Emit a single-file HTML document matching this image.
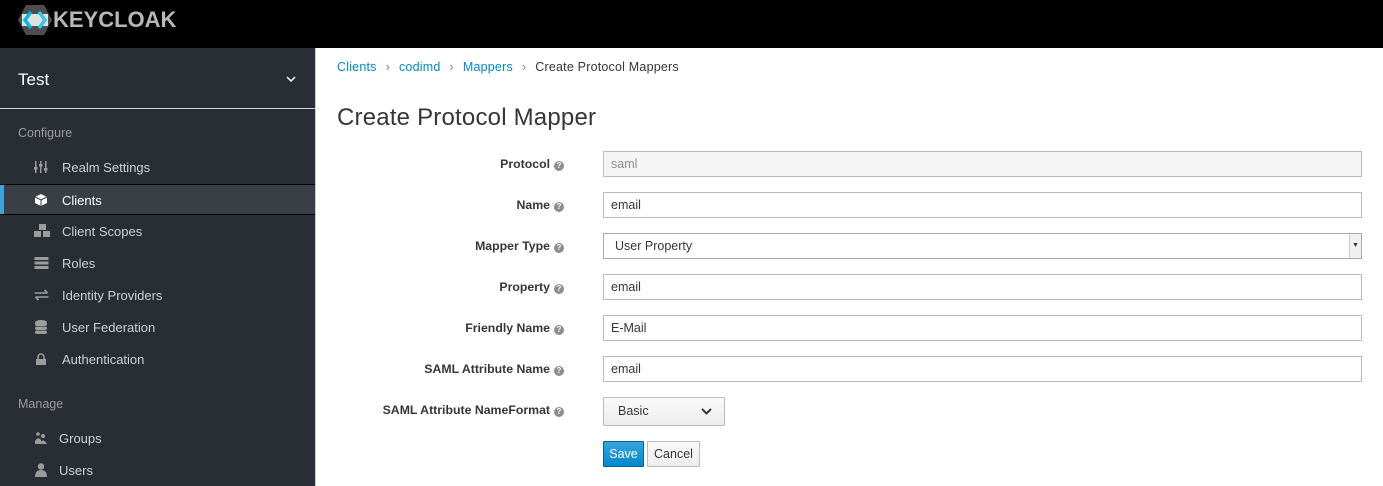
<!DOCTYPE html>
<html><head><style>
*{box-sizing:border-box;margin:0;padding:0}
body{width:1383px;height:486px;overflow:hidden;font-family:"Liberation Sans",sans-serif;font-size:12px;color:#363636;background:#fff;position:relative}
.hdr{position:absolute;left:0;top:0;width:1383px;height:48px;background:#000}
.side{position:absolute;left:0;top:48px;width:316px;height:438px;background:#292e34;border-right:1px solid #ccc}
.realm{position:relative;height:61px;border-bottom:1px solid #d1d1d1;color:#fff;font-size:17px;padding:22px 18px}
.sec{color:#9c9c9c;font-size:12.5px;padding-left:18px;position:absolute}
.it{position:absolute;left:0;width:315px;height:31px;color:#d1d1d1;font-size:13px;line-height:31px;padding-left:62px}
.it.act{background:#393f44;border-top:1px solid #030303;border-bottom:1px solid #030303;color:#fff}
.it.act:before{content:"";position:absolute;left:0;top:0;width:4px;height:100%;background:#39a5dc}
.ic{position:absolute;left:34px;top:9px;width:14px;height:12px}
.bc{position:absolute;left:337px;top:60px;font-size:12.5px;color:#363636;letter-spacing:0.2px}
.bc a{color:#0088ce}.bc span{color:#8b8d8f;margin:0 9px}
h1{position:absolute;left:337px;top:104px;font-weight:300;font-size:24px;color:#363636;letter-spacing:0.2px}
.lab{position:absolute;right:819px;font-weight:bold;font-size:12.3px;text-align:right;white-space:nowrap}
.q{display:inline-block;width:10px;height:10px;border-radius:50%;background:#8b8d8f;color:#fff;font-size:8px;line-height:10px;text-align:center;margin-left:4px;vertical-align:0}
.in{position:absolute;left:603px;width:759px;height:26px;border:1px solid #bbb;padding:0 7px;line-height:24px;font-size:12.5px}
</style></head><body>
<div class="hdr">
<svg style="position:absolute;left:18px;top:4px" width="34" height="32" viewBox="0 0 34 32"><polygon points="8,1 26,1 34,16 26,31 8,31 0,16" fill="#4d4d4d"/><polygon points="4,10 30,10 30,22 4,22" fill="#e0e0e0"/><path d="M13,8 L7,16 L13,24" stroke="#00b9e4" stroke-width="3.5" fill="none"/><path d="M21,8 L27,16 L21,24" stroke="#33c6e9" stroke-width="3.5" fill="none"/></svg>
<div style="position:absolute;left:53px;top:7px;color:#b8b8b8;font-weight:bold;font-size:22px">KEYCLOAK</div>
</div>
<div class="side">
<div class="realm">Test<svg style="position:absolute;left:286px;top:28px" width="10" height="6" viewBox="0 0 10 6"><path d="M1 1L5 5L9 1" stroke="#fff" stroke-width="1.5" fill="none"/></svg></div>
<div class="sec" style="top:78px">Configure</div>
<div class="it" style="top:104px"><svg class="ic" viewBox="0 0 14 12"><g fill="#9c9c9c"><rect x="1" y="0" width="1.5" height="12"/><rect x="6" y="0" width="1.5" height="12"/><rect x="11" y="0" width="1.5" height="12"/><rect x="0" y="6" width="3.5" height="2.5"/><rect x="5" y="3" width="3.5" height="2.5"/><rect x="10" y="7" width="3.5" height="2.5"/></g></svg>Realm Settings</div>
<div class="it act" style="top:136px"><svg class="ic" viewBox="0 0 14 12"><path d="M7 0 L13 3 L13 9 L7 12 L1 9 L1 3Z" fill="#fff"/><path d="M1 3 L7 6 L13 3 M7 6 V12" stroke="#393f44" stroke-width="1" fill="none"/></svg>Clients</div>
<div class="it" style="top:168px"><svg class="ic" viewBox="0 0 18 14" style="width:18px;height:14px;top:8px"><g fill="#9c9c9c"><rect x="5" y="0" width="7" height="6"/><rect x="0" y="7" width="7" height="6"/><rect x="9" y="7" width="7" height="6"/></g></svg>Client Scopes</div>
<div class="it" style="top:200px"><svg class="ic" viewBox="0 0 14 12" style="width:15px"><g fill="#9c9c9c"><rect y="0" width="14" height="3"/><rect y="4.5" width="14" height="3"/><rect y="9" width="14" height="3"/></g></svg>Roles</div>
<div class="it" style="top:232px"><svg class="ic" viewBox="0 0 14 12" style="width:15px"><path d="M0 4H13M10 1L13 4M14 8H1M4 11L1 8" stroke="#9c9c9c" stroke-width="1.6" fill="none"/></svg>Identity Providers</div>
<div class="it" style="top:264px"><svg class="ic" viewBox="0 0 14 14" style="height:14px;top:8px"><g fill="#9c9c9c"><ellipse cx="7" cy="2.5" rx="6" ry="2.5"/><rect x="1" y="2.5" width="12" height="3.5" rx="2"/><rect x="1" y="6.5" width="12" height="3.5" rx="2"/><rect x="1" y="10.5" width="12" height="3.5" rx="2"/></g></svg>User Federation</div>
<div class="it" style="top:296px"><svg class="ic" viewBox="0 0 14 12"><path d="M4 6V4a3 3 0 0 1 6 0V6" stroke="#9c9c9c" stroke-width="1.6" fill="none"/><rect x="2" y="6" width="10" height="6" fill="#9c9c9c"/></svg>Authentication</div>
<div class="sec" style="top:349px">Manage</div>
<div class="it" style="top:375px;padding-left:59px"><svg class="ic" viewBox="0 0 14 12"><g fill="#9c9c9c"><circle cx="4" cy="2" r="1.8"/><circle cx="9" cy="4" r="2"/><path d="M1 9 Q4 4 7 8V12H1Z"/><path d="M5 12 Q9 5 13 12Z"/></g></svg>Groups</div>
<div class="it" style="top:407px;padding-left:59px"><svg class="ic" viewBox="0 0 14 14" style="height:14px;top:8px"><g fill="#9c9c9c"><circle cx="7" cy="3.5" r="3.2"/><path d="M1 14 Q1 7 7 7 Q13 7 13 14Z"/></g></svg>Users</div>
</div>
<div class="bc"><a>Clients</a><span>›</span><a>codimd</a><span>›</span><a>Mappers</a><span>›</span>Create Protocol Mappers</div>
<h1>Create Protocol Mapper</h1>
<div class="lab" style="top:157px">Protocol<span class="q">?</span></div>
<div class="in" style="top:151px;background:#f5f5f5;color:#8b8d8f">saml</div>
<div class="lab" style="top:198px">Name<span class="q">?</span></div>
<div class="in" style="top:192px">email</div>
<div class="lab" style="top:239px">Mapper Type<span class="q">?</span></div>
<div class="in" style="top:233px;padding-left:11px;border-color:#aaa">User Property<span style="position:absolute;right:0;top:0;width:12px;height:24px;background:#f0f0f0;border-left:1px solid #ccc;font-size:7px;text-align:center">▼</span></div>
<div class="lab" style="top:280px">Property<span class="q">?</span></div>
<div class="in" style="top:274px">email</div>
<div class="lab" style="top:321px">Friendly Name<span class="q">?</span></div>
<div class="in" style="top:315px">E-Mail</div>
<div class="lab" style="top:362px">SAML Attribute Name<span class="q">?</span></div>
<div class="in" style="top:356px">email</div>
<div class="lab" style="top:403px">SAML Attribute NameFormat<span class="q">?</span></div>
<div style="position:absolute;left:603px;top:397px;width:122px;height:29px;border:1px solid #bbb;border-radius:2px;background:linear-gradient(#fafafa,#ededed);padding-left:14px;line-height:27px;font-size:12.5px">Basic<svg style="position:absolute;right:12px;top:10px" width="11" height="7" viewBox="0 0 11 7"><path d="M1 1L5.5 5.5L10 1" stroke="#363636" stroke-width="2" fill="none"/></svg></div>
<div style="position:absolute;left:603px;top:441px;width:41px;height:26px;background:linear-gradient(#39a5dc,#0088ce);border:1px solid #00659c;border-radius:1px;color:#fff;line-height:24px;text-align:center;font-size:12.5px">Save</div>
<div style="position:absolute;left:647px;top:441px;width:53px;height:26px;background:linear-gradient(#fafafa,#ededed);border:1px solid #bbb;border-radius:1px;line-height:24px;text-align:center;font-size:12.5px">Cancel</div>
</body></html>
